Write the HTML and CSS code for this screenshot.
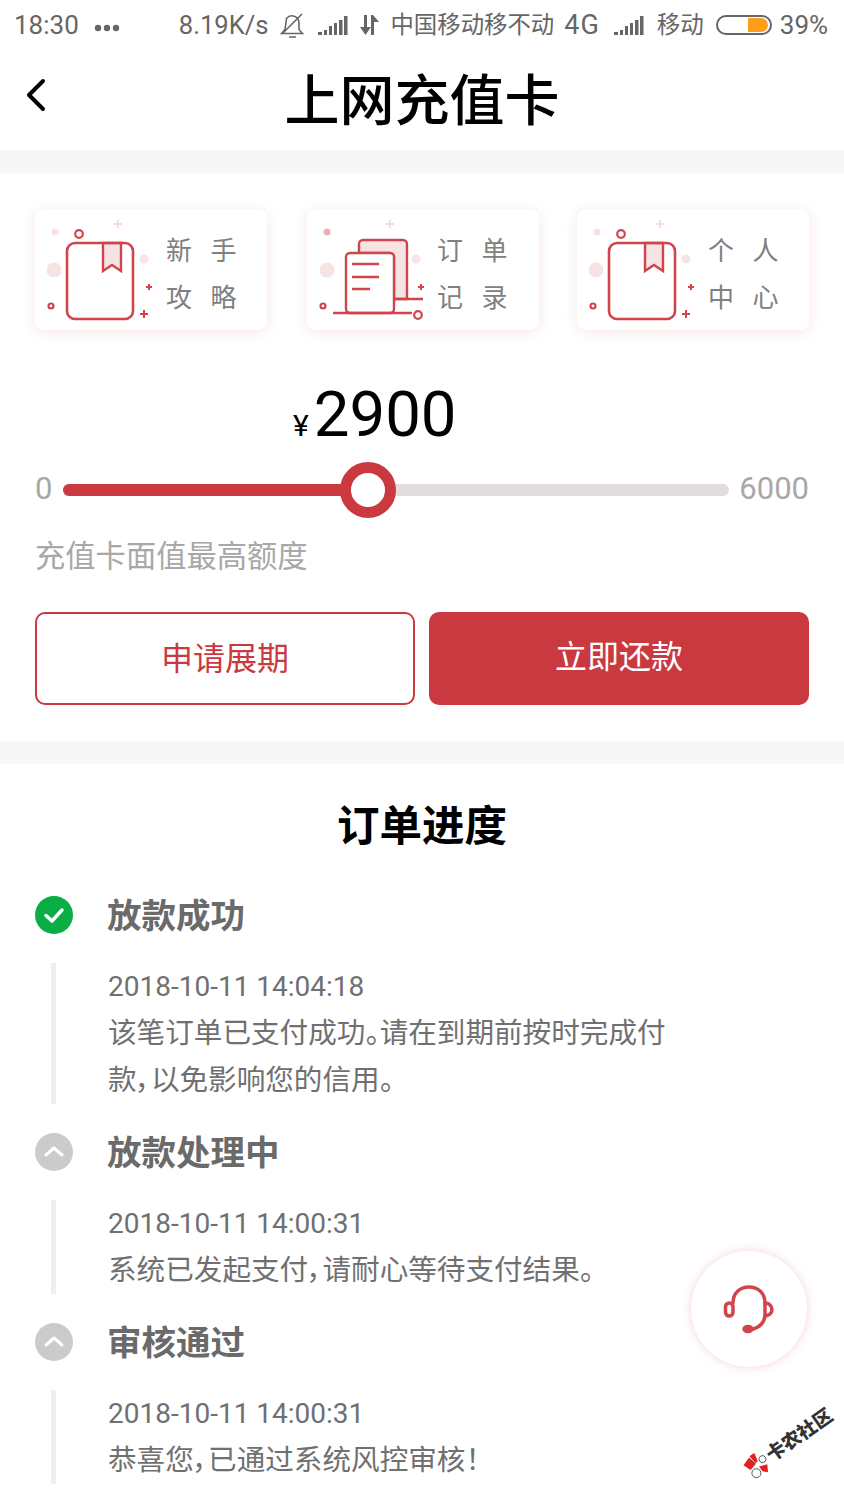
FILE: index.html
```html
<!DOCTYPE html>
<html lang="zh-CN">
<head>
  <meta charset="UTF-8">
  <title>上网充值卡</title>
  <link rel="stylesheet" href="styles.css">
</head>
<body>

<svg width="0" height="0" class="defs">
  <symbol id="sparkle-book" viewBox="0 0 130 120">
    <circle cx="20" cy="22" r="3.500" fill="#f6e3e4"/>
    <circle cx="19" cy="60" r="7.500" fill="#f6e3e4"/>
    <circle cx="109" cy="49" r="4.500" fill="#f6e3e4"/>
    <path d="M83 10v8M79 14h8" stroke="#f6dcdd" stroke-width="2"/>
    <circle cx="44" cy="24" r="3.800" fill="none" stroke="#cf454b" stroke-width="2.200"/>
    <circle cx="16" cy="96" r="2.500" fill="none" stroke="#cf454b" stroke-width="2.200"/>
    <path d="M114 74v6M111 77h6M109 100v8M105 104h8" stroke="#cf454b" stroke-width="2"/>
    <path d="M68 33h18v28l-9-6-9 6z" fill="#f6e3e4" stroke="#cf454b" stroke-width="2.400"/>
    <rect x="32" y="33" width="66" height="76" rx="8" fill="none" stroke="#cf454b" stroke-width="2.600"/>
  </symbol>
  <symbol id="sparkle-orders" viewBox="0 0 130 120">
    <circle cx="20" cy="22" r="3.500" fill="#e9b3b6"/>
    <circle cx="20" cy="60" r="7.500" fill="#f6e3e4"/>
    <circle cx="109" cy="49" r="4.500" fill="#f6e3e4"/>
    <path d="M83 10v8M79 14h8" stroke="#f6dcdd" stroke-width="2"/>
    <circle cx="16" cy="96" r="2.500" fill="none" stroke="#cf454b" stroke-width="2.200"/>
    <circle cx="111" cy="105" r="3.800" fill="none" stroke="#cf454b" stroke-width="2.200"/>
    <path d="M114 74v6M111 77h6" stroke="#cf454b" stroke-width="2"/>
    <path d="M52 43V34a4 4 0 0 1 4-4h40a4 4 0 0 1 4 4v55H87V47a4 4 0 0 0-4-4z" fill="#f6e3e4" stroke="#cf454b" stroke-width="2.400"/>
    <rect x="39" y="43" width="48" height="60" rx="4" fill="#fff" stroke="#cf454b" stroke-width="2.400"/>
    <path d="M45 54h27M45 67h27M45 79h18M26 103h79M87 89h29" fill="none" stroke="#cf454b" stroke-width="2.400"/>
  </symbol>
  <symbol id="signal" viewBox="0 0 30 20">
    <path d="M0 17h4v3H0zM6 15h3v5H6zM11 11h3v9h-3zM16 8h3v12h-3zM21 5h3.500v15H21zM26 1h3.500v19H26z" fill="#666"/>
  </symbol>
</svg>

<div class="status-bar">
  <span class="time">18:30</span>
  <svg class="dots" width="28" height="8" viewBox="0 0 28 8"><circle cx="4" cy="4" r="3.200"/><circle cx="13" cy="4" r="3.200"/><circle cx="22" cy="4" r="3.200"/></svg>
  <span class="speed">8.19K/s</span>
  <svg class="bell" width="25" height="25" viewBox="0 0 25 25" fill="none" stroke="#666" stroke-width="1.600"><path d="M1.500 20.500h21l-3.500-4V9.500a7 7 0 0 0-12.500-4L5 16.500zM9 24h7M2 21L22 1"/></svg>
  <svg class="signal-a" width="30" height="20"><use href="#signal"/></svg>
  <svg class="arrows" width="22" height="22" viewBox="0 0 22 22" fill="#666"><path d="M6 1h3v12h4l-5.500 8L2 13h4zM13 21V1h2l6 7h-5v13z"/></svg>
  <span class="carrier">中国移动移不动</span>
  <span class="net">4G</span>
  <svg class="signal-b" width="30" height="20"><use href="#signal"/></svg>
  <span class="carrier-b">移动</span>
  <span class="battery"><span class="battery-fill"></span></span>
  <span class="pct">39%</span>
</div>

<header class="title-bar">
  <svg class="back" width="22" height="34" viewBox="0 0 22 34" fill="none" stroke="#000" stroke-width="4" stroke-linecap="round" stroke-linejoin="round"><path d="M18 3L4 17l14 14"/></svg>
  <h1>上网充值卡</h1>
</header>

<div class="gap-bar"></div>

<section class="menu">
  <div class="menu-card">
    <svg class="menu-icon" width="130" height="120"><use href="#sparkle-book"/></svg>
    <div class="menu-text"><span>新 手</span><span>攻 略</span></div>
  </div>
  <div class="menu-card">
    <svg class="menu-icon" width="130" height="120"><use href="#sparkle-orders"/></svg>
    <div class="menu-text"><span>订 单</span><span>记 录</span></div>
  </div>
  <div class="menu-card">
    <svg class="menu-icon" width="130" height="120"><use href="#sparkle-book"/></svg>
    <div class="menu-text"><span>个 人</span><span>中 心</span></div>
  </div>
</section>

<section class="amount">
  <div class="amount-value"><span class="yen">¥</span>2900</div>
  <div class="slider-row">
    <span class="slider-end">0</span>
    <div class="slider">
      <div class="slider-done"></div>
      <div class="slider-knob"></div>
    </div>
    <span class="slider-end">6000</span>
  </div>
  <p class="amount-note">充值卡面值最高额度</p>
  <div class="actions">
    <button class="btn btn-outline">申请展期</button>
    <button class="btn btn-solid">立即还款</button>
  </div>
</section>

<div class="gap-bar"></div>

<section class="progress">
  <h2>订单进度</h2>

  <div class="step">
    <div class="step-head">
      <svg class="step-dot" width="38" height="38" viewBox="0 0 38 38"><circle cx="19" cy="19" r="19" fill="#0bad45"/><path d="M11 19.500l6 5.500 10-11" fill="none" stroke="#fff" stroke-width="3.500" stroke-linecap="round" stroke-linejoin="round"/></svg>
      <h3>放款成功</h3>
    </div>
    <div class="step-body">
      <p class="step-date">2018-10-11 14:04:18</p>
      <p>该笔订单已支付成功。请在到期前按时完成付</p>
      <p>款，以免影响您的信用。</p>
    </div>
  </div>

  <div class="step">
    <div class="step-head">
      <svg class="step-dot" width="38" height="38" viewBox="0 0 38 38"><circle cx="19" cy="19" r="19" fill="#cbcbcb"/><path d="M11 22l8-7 8 7" fill="none" stroke="#fff" stroke-width="3" stroke-linecap="round" stroke-linejoin="round"/></svg>
      <h3>放款处理中</h3>
    </div>
    <div class="step-body">
      <p class="step-date">2018-10-11 14:00:31</p>
      <p>系统已发起支付，请耐心等待支付结果。</p>
    </div>
  </div>

  <div class="step">
    <div class="step-head">
      <svg class="step-dot" width="38" height="38" viewBox="0 0 38 38"><circle cx="19" cy="19" r="19" fill="#cbcbcb"/><path d="M11 22l8-7 8 7" fill="none" stroke="#fff" stroke-width="3" stroke-linecap="round" stroke-linejoin="round"/></svg>
      <h3>审核通过</h3>
    </div>
    <div class="step-body">
      <p class="step-date">2018-10-11 14:00:31</p>
      <p>恭喜您，已通过系统风控审核！</p>
    </div>
  </div>
</section>

<div class="service">
  <svg width="52" height="52" viewBox="0 0 52 52" fill="none" stroke="#cf454b" stroke-width="3.500" stroke-linecap="round"><path d="M10 20C10 10 17 4 26 4s16 6 16 16"/><rect x="2.500" y="20" width="7.500" height="13" rx="3.700"/><path d="M42 20c4 0 7 3 7 6.500S46 33 42 33z"/><path d="M42 33c-1 7-5 11-12 13"/><ellipse cx="25" cy="46" rx="4" ry="2.500" fill="#cf454b"/></svg>
</div>

<div class="watermark">
  <svg width="24" height="24" viewBox="0 0 24 24"><path d="M1 4l9-3 2 9-8 2zM11 0h6l-2 9h-3zM13 14l8 3-4 7-4-4z" fill="#e0231f"/><circle cx="20" cy="10" r="3.500" fill="#fff" stroke="#444" stroke-width=".8"/><circle cx="7" cy="18" r="4.500" fill="#fff" stroke="#444" stroke-width=".8"/></svg>
  <span>卡农社区</span>
</div>

</body>
</html>
```

FILE: styles.css
```css
* {
  box-sizing: border-box;
}
html, body {
  margin: 0;
  padding: 0;
}
body {
  position: relative;
  width: 844px;
  height: 1500px;
  overflow: hidden;
  background-color: #fff;
  color: #666;
  font-family: Roboto, "Noto Sans CJK SC", sans-serif;
}
.defs {
  position: absolute;
}
h1, h2, h3, p {
  margin: 0;
}

/* status bar */
.status-bar {
  height: 50px;
  padding: 0 0 0 14px;
  display: flex;
  align-items: center;
  font-size: 26px;
  color: #666;
  white-space: nowrap;
}
.status-bar svg {
  flex: none;
}
.dots {
  margin: 6px 0 0 15px;
  fill: #666;
}
.speed {
  margin-left: 57px;
  font-size: 25.6px;
}
.bell {
  margin-left: 12px;
}
.signal-a {
  margin-left: 13px;
}
.arrows {
  margin-left: 10px;
}
.carrier {
  margin: -1px 0 0 10px;
  font-size: 23.4px;
  line-height: 30px;
}
.net {
  margin-left: 10px;
  font-size: 27px;
  letter-spacing: 1px;
}
.signal-b {
  margin-left: 14px;
}
.carrier-b {
  margin: -1px 0 0 13px;
  font-size: 23.5px;
  line-height: 30px;
}
.battery {
  width: 56px;
  height: 20px;
  margin-left: 12px;
  padding: 1px 2px;
  border: 2px solid #666;
  border-radius: 10px;
  display: flex;
  justify-content: flex-end;
}
.battery-fill {
  width: 20px;
  background-color: #ff9c1a;
  border-radius: 1px 7px 7px 1px;
}
.pct {
  margin-left: 8px;
}

/* title */
.title-bar {
  position: relative;
  height: 100px;
  display: flex;
  justify-content: center;
  align-items: center;
}
.back {
  position: absolute;
  left: 25px;
  top: 28px;
}
.title-bar h1 {
  font-size: 55px;
  font-weight: 500;
  color: #000;
  margin-top: -8px;
}
.gap-bar {
  height: 23px;
  background-color: #f7f7f7;
}

/* menu cards */
.menu {
  padding: 36px 35px 0;
  display: flex;
}
.menu-card {
  width: 232px;
  height: 121px;
  margin-right: 40px;
  background-color: #fff;
  border-radius: 9px;
  box-shadow: 0 2px 14px rgba(201, 57, 63, 0.13);
  display: flex;
  align-items: center;
}
.menu-card:nth-child(2) {
  margin-right: 38px;
}
.menu-card:last-child {
  margin-right: 0;
}
.menu-icon {
  flex: none;
}
.menu-text {
  margin: 10px 0 0 1px;
  display: flex;
  flex-direction: column;
  gap: 12px;
  font-size: 26px;
  line-height: 35px;
  color: #808080;
  white-space: pre;
  word-spacing: 12px;
}
.menu-card:nth-child(2) .menu-text {
  margin-left: 0;
}

/* amount and slider */
.amount {
  padding: 0 35px;
}
.amount-value {
  margin-top: 46px;
  padding-left: 258px;
  font-size: 63.5px;
  line-height: 78px;
  color: #000;
}
.yen {
  font-size: 30px;
  margin-right: 5px;
}
.slider-row {
  margin-top: -6px;
  height: 58px;
  display: flex;
  align-items: center;
  justify-content: space-between;
}
.slider-end {
  font-size: 31px;
  color: #a8a8a8;
}
.slider {
  position: relative;
  width: 666px;
  height: 12px;
  margin-top: 4px;
  background-color: #e2dcdc;
  border-radius: 6px;
}
.slider-done {
  width: 305px;
  height: 100%;
  background-color: #c9393f;
  border-radius: 6px 0 0 6px;
}
.slider-knob {
  position: absolute;
  left: 277px;
  top: -22px;
  width: 56px;
  height: 56px;
  background-color: #fff;
  border: 11px solid #c9393f;
  border-radius: 50%;
}
.amount-note {
  margin-top: 19px;
  font-size: 30.3px;
  line-height: 42px;
  color: #a8a8a8;
}
.actions {
  margin: 34px 0 36px;
  display: flex;
  gap: 14px;
}
.btn {
  flex: none;
  width: 380px;
  height: 93px;
  font-family: inherit;
  font-size: 32px;
  border-radius: 10px;
}
.btn-outline {
  padding: 0 0 6px;
  background-color: #fff;
  border: 2px solid #c9393f;
  color: #c9393f;
}
.btn-solid {
  padding: 0 0 10px;
  background-color: #c9393f;
  border: none;
  color: #fff;
}

/* order progress */
.progress {
  padding: 0 35px;
}
.progress h2 {
  margin-top: 36px;
  text-align: center;
  font-size: 42.5px;
  line-height: 54px;
  font-weight: 700;
  color: #000;
}
.step-head {
  height: 50px;
  display: flex;
  align-items: center;
}
.step:first-of-type {
  margin-top: 36px;
}
.step-dot {
  flex: none;
}
.step-head h3 {
  margin: -4px 0 0 34px;
  font-size: 34.5px;
  font-weight: 700;
  color: #6a6a6a;
}
.step-body {
  margin: 23px 0 23px 16px;
  padding-left: 52px;
  border-left: 5px solid #efefef;
  font-size: 28.6px;
  line-height: 47px;
  color: #707070;
  font-feature-settings: "palt";
}
.step-date {
  font-size: 28px;
}

/* floating bits */
.service {
  position: absolute;
  left: 691px;
  top: 1251px;
  width: 116px;
  height: 116px;
  background-color: #fff;
  border-radius: 50%;
  box-shadow: 0 0 10px rgba(201, 57, 63, 0.22);
  display: flex;
  justify-content: center;
  align-items: center;
}
.watermark {
  position: absolute;
  left: 738px;
  top: 1431px;
  display: flex;
  align-items: center;
  gap: 2px;
  transform: rotate(-35deg);
  font-size: 19px;
  line-height: 24px;
  font-weight: 900;
  color: #333;
  white-space: nowrap;
}
```
